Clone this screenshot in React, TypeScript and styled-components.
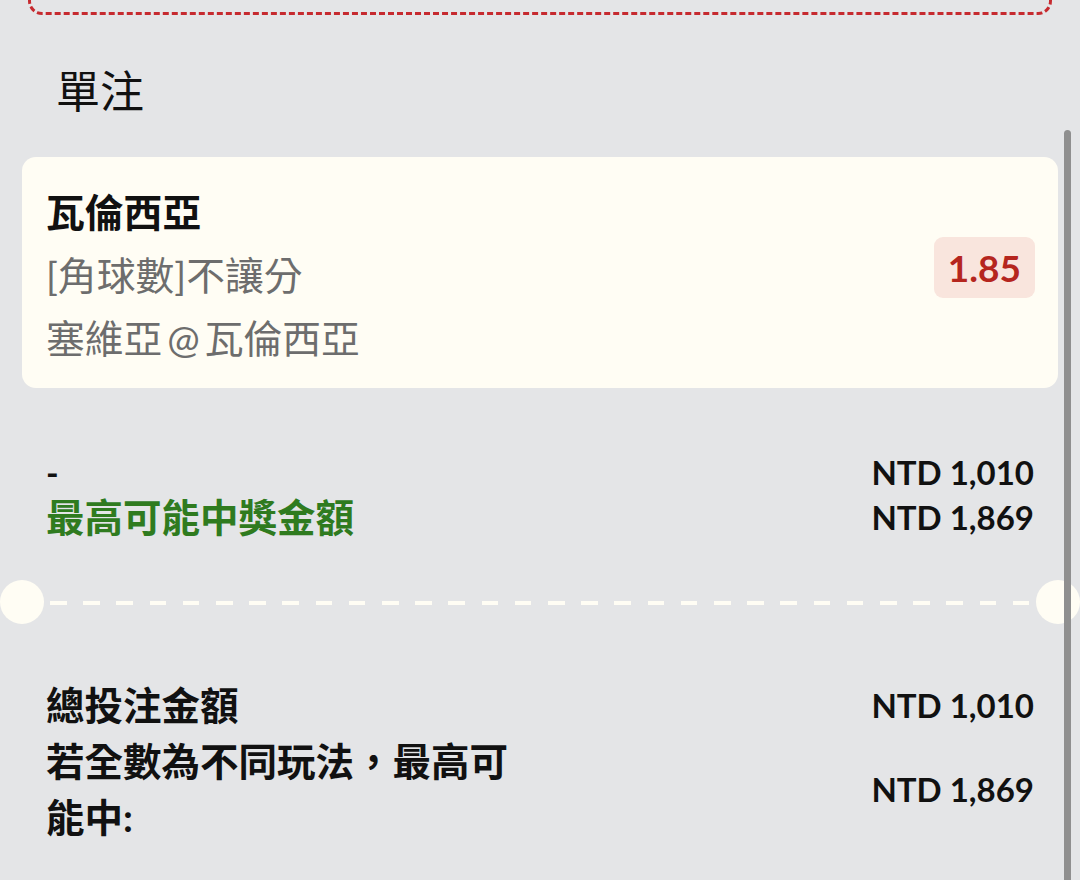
import React from "react";
import styled, { createGlobalStyle } from "styled-components";

const GlobalStyle = createGlobalStyle`
  html, body {
    margin: 0;
    padding: 0;
    background: #e4e5e7;
  }
  body {
    font-family: Lato, "Noto Sans CJK TC", sans-serif;
    color: #111;
  }
`;

const Page = styled.div`
  position: relative;
  width: 1080px;
  height: 880px;
  overflow: hidden;
  background: #e4e5e7;
`;

const TopClip = styled.div`
  height: 15px;
  overflow: hidden;
  display: flex;
  align-items: flex-end;
  padding: 0 28px;
  box-sizing: border-box;
`;

const DashedBox = styled.div`
  flex: 1;
  height: 80px;
  border: 3px dashed #c62a2f;
  border-radius: 14px;
`;

const SectionTitle = styled.h2`
  margin: 46px 0 36px;
  padding-left: 56px;
  font-size: 44px;
  font-weight: 400;
  line-height: 60px;
  color: #111;
`;

const Card = styled.div`
  margin: 0 22px;
  background: #fffdf4;
  border-radius: 14px;
  display: flex;
  align-items: flex-start;
  justify-content: space-between;
  padding: 24px 23px 18px 24px;
`;

const CardInfo = styled.div`
  display: flex;
  flex-direction: column;
`;

const CardLine = styled.div<{ $strong?: boolean; $tight?: boolean }>`
  font-size: 38.8px;
  line-height: 63px;
  font-weight: ${(p) => (p.$strong ? 700 : 400)};
  color: ${(p) => (p.$strong ? "#111" : "#6d6d6d")};
  word-spacing: ${(p) => (p.$tight ? "-5px" : "normal")};
`;

const OddsBadge = styled.div`
  margin-top: 56px;
  display: flex;
  align-items: center;
  height: 61px;
  padding: 0 14px;
  border-radius: 9px;
  background: #f9e5dd;
  color: #b5261e;
  font-family: Lato, sans-serif;
  font-weight: 700;
  font-size: 37px;
`;

const AmountGrid = styled.div`
  display: grid;
  grid-template-columns: 1fr auto;
  grid-auto-rows: 45px;
  align-items: center;
  padding: 62px 46px 0 46px;
`;

const Label = styled.div<{ $tone?: "green" | "dark" }>`
  font-size: 38.5px;
  font-weight: 700;
  line-height: 45px;
  color: ${(p) => (p.$tone === "green" ? "#2f7b1f" : "#111")};
`;

const Dash = styled.div`
  font-family: Lato, sans-serif;
  font-size: 34px;
  font-weight: 700;
  line-height: 45px;
  color: #111;
`;

const Amount = styled.div`
  font-family: Lato, sans-serif;
  font-size: 33px;
  font-weight: 700;
  line-height: 45px;
  color: #111;
  text-align: right;
  white-space: nowrap;
`;

const Separator = styled.div`
  margin-top: 40px;
  height: 44px;
  display: flex;
  align-items: center;
`;

const Notch = styled.div`
  width: 44px;
  height: 44px;
  flex: none;
  border-radius: 50%;
  background: #fffdf4;
`;

const DashLine = styled.div`
  flex: 1;
  height: 4px;
  margin: 2px 6px 0;
  background: repeating-linear-gradient(
    to right,
    #fffdf4 0 16.6px,
    transparent 16.6px 33.2px
  );
`;

const SummaryGrid = styled.div`
  margin-top: 53px;
  display: grid;
  grid-template-columns: 475px 1fr;
  padding: 0 46px;
`;

const SummaryLabel = styled.div`
  font-size: 38.5px;
  font-weight: 700;
  line-height: 56px;
  color: #111;
`;

const SummaryAmount = styled(Amount)`
  align-self: center;
`;

const ScrollThumb = styled.div`
  position: absolute;
  left: 1064px;
  top: 130px;
  bottom: 0;
  width: 7px;
  border-radius: 4px 4px 0 0;
  background: #8f8f8f;
`;

export default function App() {
  return (
    <>
      <GlobalStyle />
      <Page>
        <TopClip>
          <DashedBox />
        </TopClip>
        <SectionTitle>單注</SectionTitle>
        <Card>
          <CardInfo>
            <CardLine $strong>瓦倫西亞</CardLine>
            <CardLine>[角球數]不讓分</CardLine>
            <CardLine $tight>塞維亞 @ 瓦倫西亞</CardLine>
          </CardInfo>
          <OddsBadge>1.85</OddsBadge>
        </Card>
        <AmountGrid>
          <Dash>-</Dash>
          <Amount>NTD 1,010</Amount>
          <Label $tone="green">最高可能中獎金額</Label>
          <Amount>NTD 1,869</Amount>
        </AmountGrid>
        <Separator>
          <Notch />
          <DashLine />
          <Notch />
        </Separator>
        <SummaryGrid>
          <SummaryLabel>總投注金額</SummaryLabel>
          <SummaryAmount>NTD 1,010</SummaryAmount>
          <SummaryLabel>若全數為不同玩法，最高可能中:</SummaryLabel>
          <SummaryAmount>NTD 1,869</SummaryAmount>
        </SummaryGrid>
        <ScrollThumb />
      </Page>
    </>
  );
}
